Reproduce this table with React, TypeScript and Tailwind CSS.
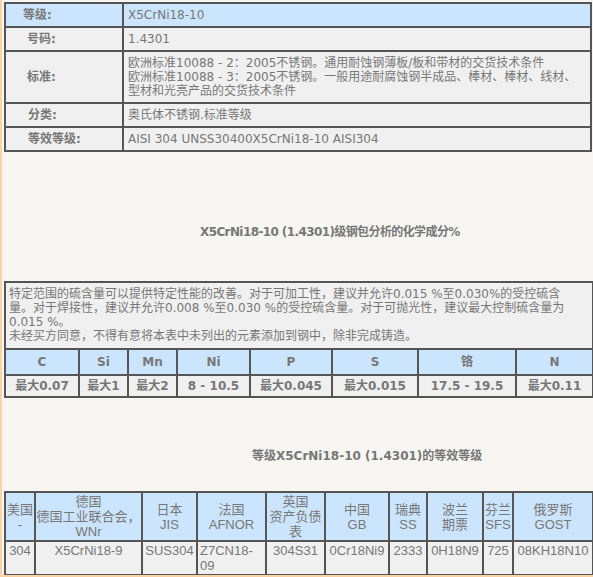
const FONT = "font-['DejaVu_Sans','Noto_Sans_CJK_SC',sans-serif]";

const cell = 'border-2 border-[#555] text-[12px] leading-[14px] text-[#777]';

function InfoTable() {
  const rows: { label: string; pl: string; value: React.ReactNode; head?: boolean }[] = [
    { label: '等级:', pl: 'pl-[17px]', value: 'X5CrNi18-10', head: true },
    { label: '号码:', pl: 'pl-[21px]', value: '1.4301' },
    {
      label: '标准:',
      pl: 'pl-[21px]',
      value: (
        <>
          <span className="block whitespace-nowrap">欧洲标准10088 - 2：2005不锈钢。通用耐蚀钢薄板/板和带材的交货技术条件</span>
          <span className="block whitespace-nowrap">欧洲标准10088 - 3：2005不锈钢。一般用途耐腐蚀钢半成品、棒材、棒材、线材、</span>
          <span className="block whitespace-nowrap">型材和光亮产品的交货技术条件</span>
        </>
      ),
    },
    { label: '分类:', pl: 'pl-[22px]', value: '奥氏体不锈钢.标准等级' },
    { label: '等效等级:', pl: 'pl-[22px]', value: 'AISI 304 UNSS30400X5CrNi18-10 AISI304' },
  ];
  return (
    <table className="w-[588px] table-fixed border-collapse">
      <colgroup>
        <col className="w-[118px]" />
        <col />
      </colgroup>
      <tbody>
        {rows.map((r) => (
          <tr key={r.label} className={r.head ? 'bg-[#cce5ff]' : 'bg-[#f0f0f0]'}>
            <td className={`${cell} ${r.pl} py-[4px] font-bold`}>{r.label}</td>
            <td className={`${cell} px-[4px] py-[4px]`}>{r.value}</td>
          </tr>
        ))}
      </tbody>
    </table>
  );
}

const chem = [
  { el: 'C', v: '最大0.07', w: 'w-[74px]' },
  { el: 'Si', v: '最大1', w: 'w-[49px]' },
  { el: 'Mn', v: '最大2', w: 'w-[49px]' },
  { el: 'Ni', v: '8 - 10.5', w: 'w-[73px]' },
  { el: 'P', v: '最大0.045', w: 'w-[82px]' },
  { el: 'S', v: '最大0.015', w: 'w-[86px]' },
  { el: '铬', v: '17.5 - 19.5', w: 'w-[98px]' },
  { el: 'N', v: '最大0.11', w: 'w-[77px]' },
];

function ChemTable() {
  return (
    <table className="w-[588px] table-fixed border-collapse">
      <colgroup>
        {chem.map((c) => (
          <col key={c.el} className={c.w} />
        ))}
      </colgroup>
      <tbody>
        <tr className="bg-[#f0f0f0]">
          <td colSpan={8} className={`${cell} px-[3px] pt-[4px] pb-[5px] leading-[14.3px]`}>
            <span className="block whitespace-nowrap">特定范围的硫含量可以提供特定性能的改善。对于可加工性，建议并允许0.015 %至0.030%的受控硫含</span>
            <span className="block whitespace-nowrap">量。对于焊接性，建议并允许0.008 %至0.030 %的受控硫含量。对于可抛光性，建议最大控制硫含量为</span>
            <span className="block whitespace-nowrap">0.015 %。</span>
            <span className="block whitespace-nowrap">未经买方同意，不得有意将本表中未列出的元素添加到钢中，除非完成铸造。</span>
          </td>
        </tr>
        <tr className="bg-[#cce5ff]">
          {chem.map((c) => (
            <td key={c.el} className={`${cell} py-[5px] text-center font-bold`}>
              {c.el}
            </td>
          ))}
        </tr>
        <tr className="bg-[#f0f0f0]">
          {chem.map((c) => (
            <td key={c.el} className={`${cell} py-[3px] text-center font-bold whitespace-nowrap`}>
              {c.v}
            </td>
          ))}
        </tr>
      </tbody>
    </table>
  );
}

const equiv: { head: React.ReactNode; val: React.ReactNode; w: string; left?: boolean }[] = [
  { head: <>美国<br />-</>, val: '304', w: 'w-[30px]' },
  { head: <>德国<br />德国工业联合会，<br />WNr</>, val: 'X5CrNi18-9', w: 'w-[107px]' },
  { head: <>日本<br />JIS</>, val: 'SUS304', w: 'w-[55px]' },
  { head: <>法国<br />AFNOR</>, val: <>Z7CN18-<br />09</>, w: 'w-[69px]', left: true },
  { head: <>英国<br />资产负债<br />表</>, val: '304S31', w: 'w-[59px]' },
  { head: <>中国<br />GB</>, val: '0Cr18Ni9', w: 'w-[64px]' },
  { head: <>瑞典<br />SS</>, val: '2333', w: 'w-[38px]' },
  { head: <>波兰<br />期票</>, val: '0H18N9', w: 'w-[56px]' },
  { head: <>芬兰<br />SFS</>, val: '725', w: 'w-[30px]' },
  { head: <>俄罗斯<br />GOST</>, val: '08KH18N10', w: 'w-[80px]' },
];

const cell3 =
  "border-2 border-[#555] text-[13px] text-[#777] font-['Liberation_Sans','Noto_Sans_CJK_SC',sans-serif] px-0";

function EquivTable() {
  return (
    <table className="w-[588px] table-fixed border-collapse">
      <colgroup>
        {equiv.map((e, i) => (
          <col key={i} className={e.w} />
        ))}
      </colgroup>
      <tbody>
        <tr className="bg-[#cce5ff]">
          {equiv.map((e, i) => (
            <td key={i} className={`${cell3} leading-[15px] py-[1px] text-center align-middle whitespace-nowrap`}>
              {e.head}
            </td>
          ))}
        </tr>
        <tr className="bg-[#f0f0f0]">
          {equiv.map((e, i) => (
            <td
              key={i}
              className={`${cell3} leading-[14.5px] pt-[2px] pb-[1px] align-top whitespace-nowrap ${
                e.left ? 'text-left pl-[2px]' : 'text-center'
              }`}
            >
              {e.val}
            </td>
          ))}
        </tr>
      </tbody>
    </table>
  );
}

export default function App() {
  return (
    <div
      className={`${FONT} w-[593px] h-[577px] overflow-hidden bg-[#f8f6f2] border-l-2 border-b-2 border-[#f9d2a6] pl-[2px] pr-[1px] pt-[2px]`}
    >
      <InfoTable />
      <div className="mt-[73px] mb-[42px] pl-[196px] text-[12px] leading-[14px] font-bold tracking-[-0.6px] text-[#777] whitespace-nowrap">
        X5CrNi18-10 (1.4301)级钢包分析的化学成分%
      </div>
      <ChemTable />
      <div className="mt-[51px] mb-[28px] pl-[248px] text-[12px] leading-[14px] font-bold text-[#777] whitespace-nowrap">
        等级X5CrNi18-10 (1.4301)的等效等级
      </div>
      <EquivTable />
    </div>
  );
}
